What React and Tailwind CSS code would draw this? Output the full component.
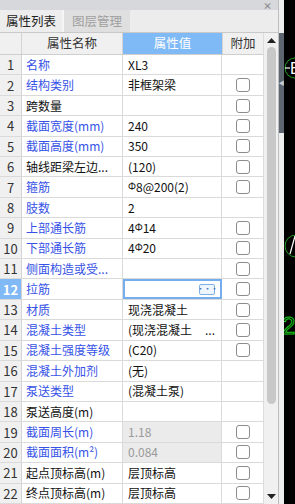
const rows = [
  { n: 1, name: '名称', value: 'XL3', blue: true, cb: false },
  { n: 2, name: '结构类别', value: '非框架梁', blue: true, cb: true },
  { n: 3, name: '跨数量', value: '', blue: false, cb: true },
  { n: 4, name: '截面宽度(mm)', value: '240', blue: true, cb: true },
  { n: 5, name: '截面高度(mm)', value: '350', blue: true, cb: true },
  { n: 6, name: '轴线距梁左边...', value: '(120)', blue: false, cb: true },
  { n: 7, name: '箍筋', value: ['', '8@200(2)'], blue: true, cb: true },
  { n: 8, name: '肢数', value: '2', blue: true, cb: false },
  { n: 9, name: '上部通长筋', value: ['4', '14'], blue: true, cb: true },
  { n: 10, name: '下部通长筋', value: ['4', '20'], blue: true, cb: true },
  { n: 11, name: '侧面构造或受...', value: '', blue: true, cb: true },
  { n: 12, name: '拉筋', value: '', blue: true, cb: true, selected: true },
  { n: 13, name: '材质', value: '现浇混凝土', blue: true, cb: true },
  { n: 14, name: '混凝土类型', value: '(现浇混凝土', more: true, blue: true, cb: true },
  { n: 15, name: '混凝土强度等级', value: '(C20)', blue: true, cb: true },
  { n: 16, name: '混凝土外加剂', value: '(无)', blue: true, cb: false },
  { n: 17, name: '泵送类型', value: '(混凝土泵)', blue: true, cb: false },
  { n: 18, name: '泵送高度(m)', value: '', blue: false, cb: false },
  { n: 19, name: '截面周长(m)', value: '1.18', blue: true, cb: true, readonly: true },
  { n: 20, name: '截面面积(m²)', value: '0.084', blue: true, cb: true, readonly: true },
  { n: 21, name: '起点顶标高(m)', value: '层顶标高', blue: false, cb: true },
  { n: 22, name: '终点顶标高(m)', value: '层顶标高', blue: false, cb: true },
]

function Checkbox() {
  return <span className="block w-[14px] h-[14px] rounded-[3px] border border-[#8c8c8c] bg-white" />
}

function Value({ row }) {
  if (Array.isArray(row.value)) {
    return (
      <span>
        {row.value[0]}
        <span className="text-[10px] align-[2px]">Φ</span>
        {row.value[1]}
      </span>
    )
  }
  return <span>{row.value}</span>
}

function Row({ row }) {
  return (
    <div className="flex h-[21px] border-b border-[#dadada] bg-white">
      <div
        className={`w-[22px] shrink-0 flex items-center justify-center border-r border-[#d4d4d4] text-[13px] ${
          row.selected ? 'bg-[#80b9f6] text-white font-bold' : 'bg-[#f0f0f0] text-[#333]'
        }`}
      >
        {row.n}
      </div>
      <div
        className={`w-[101px] shrink-0 flex items-center pl-[4px] border-r border-[#dadada] whitespace-nowrap overflow-hidden ${
          row.blue ? 'text-[#3652e6]' : 'text-[#111]'
        }`}
      >
        {row.name}
      </div>
      {row.selected ? (
        <div className="w-[99px] shrink-0 flex items-center justify-end pr-[5px] border-2 border-[#74aeee] bg-white">
          <span className="w-[16px] h-[11px] rounded-[2px] border border-[#7fb0e6] bg-[#eef5fd] flex items-center justify-center text-[8px] leading-none text-[#3a6fb8] tracking-[-1px]">
            ···
          </span>
        </div>
      ) : (
        <div
          className={`w-[99px] shrink-0 flex items-center justify-between pl-[5px] pr-[6px] border-r border-[#dadada] whitespace-nowrap overflow-hidden ${
            row.readonly ? 'bg-[#ebebeb] text-[#9a9a9a]' : 'text-[#111]'
          }`}
        >
          <Value row={row} />
          {row.more && <span className="text-[#222] text-[12px]">...</span>}
        </div>
      )}
      <div className="w-[41px] shrink-0 flex items-center justify-center">{row.cb && <Checkbox />}</div>
    </div>
  )
}

export default function App() {
  return (
    <div
      className="w-[295px] h-[504px] flex bg-black overflow-hidden text-[12px] leading-none"
      style={{ fontFamily: '"Noto Sans CJK SC", "Noto Sans", sans-serif' }}
    >
      {/* 属性面板 */}
      <div className="w-[279px] shrink-0 flex flex-col bg-[#ececec] border-r border-[#bdbdbd]">
        <div className="h-[10px] shrink-0 bg-[#d6d8dc] flex justify-end items-center pr-[6px]">
          <span className="text-[9px] text-[#8a8a8a] font-bold">×</span>
        </div>
        <div className="h-[23px] shrink-0 flex items-stretch border-b border-[#c9c9c9]">
          <div className="w-[62px] flex items-center justify-center bg-[#ededed] text-[#222] text-[12.5px]">属性列表</div>
          <div className="w-[2px] bg-[#f6f6f6]" />
          <div className="w-[66px] flex items-center justify-center bg-[#dfdfdf] text-[#a0a0a0] text-[12.5px]">图层管理</div>
          <div className="flex-1 bg-[#ececec]" />
        </div>
        <div className="flex-1 flex min-h-0">
          <div className="w-[263px] shrink-0 flex flex-col overflow-hidden">
            <div className="h-[22px] shrink-0 flex border-b border-[#cfcfcf] bg-[#f0f0f0]">
              <div className="w-[22px] border-r border-[#d4d4d4]" />
              <div className="w-[101px] flex items-center justify-center border-r border-[#d4d4d4] text-[#333] text-[12.5px]">属性名称</div>
              <div className="w-[99px] flex items-center justify-center bg-[#7fb9f6] text-white text-[12.5px]">属性值</div>
              <div className="w-[41px] flex items-center justify-center border-l border-[#d4d4d4] text-[#333] text-[12.5px]">附加</div>
            </div>
            {rows.map((row) => (
              <Row key={row.n} row={row} />
            ))}
          </div>
          {/* 滚动条 */}
          <div className="w-[15px] shrink-0 flex flex-col items-center bg-[#f0f0f0] border-l border-[#dcdcdc] pt-[5px] pb-[5px]">
            <svg width="9" height="5" viewBox="0 0 9 5">
              <polygon points="4.5,0 9,5 0,5" fill="#222" />
            </svg>
            <div className="w-[9px] h-[357px] mt-[4px] rounded-full bg-[#c8c8c8]" />
            <div className="flex-1" />
            <svg width="9" height="5" viewBox="0 0 9 5">
              <polygon points="0,0 9,0 4.5,5" fill="#222" />
            </svg>
          </div>
        </div>
      </div>
      {/* 分隔条 */}
      <div className="w-[5px] shrink-0 flex flex-col bg-[#eeeeee]">
        <div className="h-[33px]" />
        <div className="h-[100px] bg-[#5d6571] flex items-center justify-center">
          <span className="text-[6px] text-[#c8ccd2]">◀</span>
        </div>
      </div>
      {/* 绘图区 */}
      <div className="flex-1 relative bg-black">
        <svg className="absolute left-0 top-0" width="11" height="504" viewBox="0 0 11 504">
          <circle cx="11" cy="68" r="10" fill="none" stroke="#1f9a1f" strokeWidth="1" />
          <line x1="1" y1="68" x2="6" y2="68" stroke="#fff" strokeWidth="1.2" />
          <text x="6" y="74" fill="#fff" fontSize="16" fontFamily="Liberation Sans, sans-serif">B</text>
          <circle cx="12" cy="246" r="11" fill="none" stroke="#1f9a1f" strokeWidth="1" />
          <line x1="6" y1="254" x2="11" y2="236" stroke="#fff" strokeWidth="1.2" />
          <text x="-2" y="334" fill="none" stroke="#18c818" strokeWidth="1" fontSize="24" fontFamily="Liberation Sans, sans-serif">2(</text>
        </svg>
      </div>
    </div>
  )
}
